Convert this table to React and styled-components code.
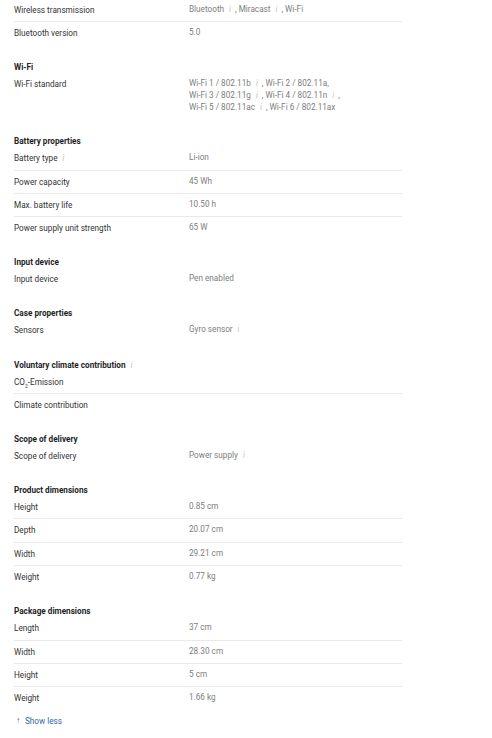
import React from 'react'
import styled, { createGlobalStyle } from 'styled-components'

const GlobalStyle = createGlobalStyle`
    body {
        margin: 0;
        background: #ffffff;
        font-family: Roboto, "Liberation Sans", Arial, sans-serif;
        -webkit-font-smoothing: antialiased;
    }
`

const Info = () => <InfoMark>i</InfoMark>

const sections = [
    {
        rows: [
            { label: 'Wireless transmission', value: [[<>Bluetooth</>, <Info key="a" />, <>, Miracast</>, <Info key="b" />, <>, Wi-Fi</>]] },
            { label: 'Bluetooth version', value: [['5.0']] },
        ],
    },
    {
        title: 'Wi-Fi',
        rows: [
            {
                label: 'Wi-Fi standard',
                value: [
                    ['Wi-Fi 1 / 802.11b', <Info key="a" />, ', Wi-Fi 2 / 802.11a,'],
                    ['Wi-Fi 3 / 802.11g', <Info key="a" />, ', Wi-Fi 4 / 802.11n', <Info key="b" />, ','],
                    ['Wi-Fi 5 / 802.11ac', <Info key="a" />, ', Wi-Fi 6 / 802.11ax'],
                ],
            },
        ],
    },
    {
        title: 'Battery properties',
        rows: [
            { label: 'Battery type', info: true, value: [['Li-ion']] },
            { label: 'Power capacity', value: [['45 Wh']] },
            { label: 'Max. battery life', value: [['10.50 h']] },
            { label: 'Power supply unit strength', value: [['65 W']] },
        ],
    },
    {
        title: 'Input device',
        rows: [{ label: 'Input device', value: [['Pen enabled']] }],
    },
    {
        title: 'Case properties',
        rows: [{ label: 'Sensors', value: [['Gyro sensor', <Info key="a" />]] }],
    },
    {
        title: 'Voluntary climate contribution',
        info: true,
        rows: [
            { label: <>CO<sub>2</sub>-Emission</>, value: [] },
            { label: 'Climate contribution', value: [] },
        ],
    },
    {
        title: 'Scope of delivery',
        rows: [{ label: 'Scope of delivery', value: [['Power supply', <Info key="a" />]] }],
    },
    {
        title: 'Product dimensions',
        rows: [
            { label: 'Height', value: [['0.85 cm']] },
            { label: 'Depth', value: [['20.07 cm']] },
            { label: 'Width', value: [['29.21 cm']] },
            { label: 'Weight', value: [['0.77 kg']] },
        ],
    },
    {
        title: 'Package dimensions',
        rows: [
            { label: 'Length', value: [['37 cm']] },
            { label: 'Width', value: [['28.30 cm']] },
            { label: 'Height', value: [['5 cm']] },
            { label: 'Weight', value: [['1.66 kg']] },
        ],
    },
]

export default function App() {
    return (
        <>
            <GlobalStyle />
            <Specs>
                <SectionList>
                    {sections.map((section, i) => (
                        <Section key={i}>
                            {section.title && (
                                <SectionTitle>
                                    {section.title}
                                    {section.info && <Info />}
                                </SectionTitle>
                            )}
                            {section.rows.map((row, j) => (
                                <Row key={j}>
                                    <Label>
                                        {row.label}
                                        {row.info && <Info />}
                                    </Label>
                                    <Value>
                                        {row.value.map((line, k) => (
                                            <ValueLine key={k}>
                                                {line.map((part, p) => (
                                                    <React.Fragment key={p}>{part}</React.Fragment>
                                                ))}
                                            </ValueLine>
                                        ))}
                                    </Value>
                                </Row>
                            ))}
                        </Section>
                    ))}
                </SectionList>
                <ShowLess>
                    <Arrow>↑</Arrow>
                    Show less
                </ShowLess>
            </Specs>
        </>
    )
}

const Specs = styled.div`
    width: 388px;
    margin: -1px 0 0 14px;
    display: flex;
    flex-direction: column;
`

const SectionList = styled.div`
    display: flex;
    flex-direction: column;
    gap: 16.85px;
`

const Section = styled.section`
    display: flex;
    flex-direction: column;
`

const SectionTitle = styled.div`
    font-size: 8.2px;
    line-height: 12px;
    font-weight: 700;
    color: #1f1f1f;
`

const Row = styled.div`
    display: grid;
    grid-template-columns: 175px 1fr;
    padding: 5px 0;
    font-size: 8.2px;
    line-height: 12.3px;
    border-bottom: 1px solid #e9e9e9;
    &:last-child {
        border-bottom: none;
    }
`

const Label = styled.div`
    color: #333333;
    sub {
        font-size: 5px;
        line-height: 0;
    }
`

const Value = styled.div`
    color: #7d7d7d;
    margin-top: -1px;
`

const ValueLine = styled.div`
    line-height: 12px;
    white-space: nowrap;
`

const InfoMark = styled.span`
    display: inline-block;
    margin: 0 4px 0 5px;
    font-style: italic;
    font-weight: 400;
    color: #c4c4c4;
`

const ShowLess = styled.button`
    display: flex;
    align-items: center;
    gap: 5px;
    margin-top: 6px;
    padding: 0 0 0 2px;
    border: none;
    background: none;
    font-family: Roboto, "Liberation Sans", Arial, sans-serif;
    font-size: 8.2px;
    line-height: 12px;
    color: #2f6aa3;
    cursor: pointer;
    align-self: flex-start;
`

const Arrow = styled.span`
    font-size: 8px;
`
